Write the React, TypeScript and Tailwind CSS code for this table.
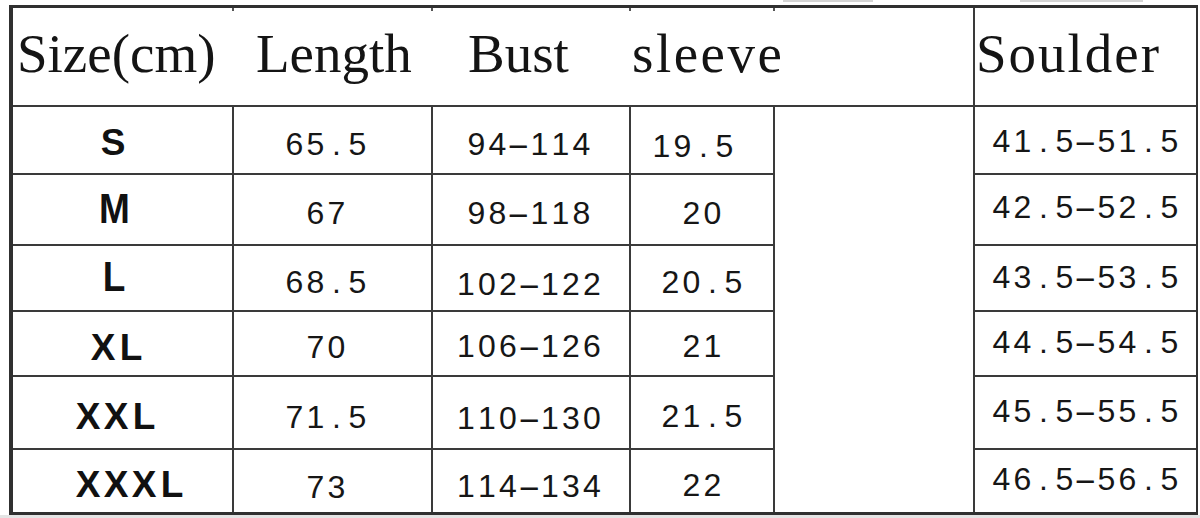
import React from "react";

function Chars({ text, box, glyph = "" }: { text: string; box: string; glyph?: string }) {
  return (
    <>
      {text.split("").map((c, i) => (
        <span key={i} className={`${box} inline-block text-center`}>
          {c === "-" ? (
            <span className="inline-block scale-x-[2.2]">-</span>
          ) : glyph ? (
            <span className={`inline-block ${glyph}`}>{c}</span>
          ) : (
            c
          )}
        </span>
      ))}
    </>
  );
}

type Row = {
  h: string;
  label: string;
  lpl: string;
  lpt: string;
  lglyph: string;
  c2: string;
  c2pt: string;
  c3: string;
  c3pt: string;
  c4: string;
  c4pt: string;
  c4x: string;
  c6: string;
  c6pt: string;
};

const rows: Row[] = [
  { h: "h-[68px]", label: "S", lpl: "pl-[86px]", lpt: "pt-[17px]", lglyph: "", c2: "65.5", c2pt: "pt-[21px]", c3: "94-114", c3pt: "pt-[21px]", c4: "19.5", c4pt: "pt-[23px]", c4x: "pr-[18px]", c6: "41.5-51.5", c6pt: "pt-[18px]" },
  { h: "h-[71px]", label: "M", lpl: "pl-[86px]", lpt: "pt-[18px]", lglyph: "scale-y-[1.16] origin-bottom", c2: "67", c2pt: "pt-[22px]", c3: "98-118", c3pt: "pt-[22px]", c4: "20", c4pt: "pt-[22px]", c4x: "", c6: "42.5-52.5", c6pt: "pt-[16px]" },
  { h: "h-[66px]", label: "L", lpl: "pl-[87px]", lpt: "pt-[15px]", lglyph: "scale-y-[1.16] origin-bottom", c2: "68.5", c2pt: "pt-[20px]", c3: "102-122", c3pt: "pt-[22px]", c4: "20.5", c4pt: "pt-[20px]", c4x: "", c6: "43.5-53.5", c6pt: "pt-[15px]" },
  { h: "h-[65px]", label: "XL", lpl: "pl-[76px]", lpt: "pt-[17px]", lglyph: "", c2: "70", c2pt: "pt-[19px]", c3: "106-126", c3pt: "pt-[18px]", c4: "21", c4pt: "pt-[18px]", c4x: "", c6: "44.5-54.5", c6pt: "pt-[14px]" },
  { h: "h-[73px]", label: "XXL", lpl: "pl-[61px]", lpt: "pt-[21px]", lglyph: "", c2: "71.5", c2pt: "pt-[24px]", c3: "110-130", c3pt: "pt-[25px]", c4: "21.5", c4pt: "pt-[23px]", c4x: "", c6: "45.5-55.5", c6pt: "pt-[18px]" },
  { h: "h-[64px]", label: "XXXL", lpl: "pl-[61px]", lpt: "pt-[16px]", lglyph: "", c2: "73", c2pt: "pt-[21px]", c3: "114-134", c3pt: "pt-[20px]", c4: "22", c4pt: "pt-[19px]", c4x: "", c6: "46.5-56.5", c6pt: "pt-[13px]" },
];

const num = "flex justify-center items-start whitespace-nowrap text-[32px] leading-none text-[#161616] font-['Liberation_Sans',Arial,sans-serif]";

export default function App() {
  return (
    <div className="w-[1200px] h-[518px] bg-white flex flex-col overflow-hidden">
      {/* top strip with faint remnants of cut-off content */}
      <div className="h-[5px] flex items-start shrink-0">
        <div className="w-[783px]" />
        <div className="w-[90px] h-[2px] bg-[#d4d4d4]" />
        <div className="w-[147px]" />
        <div className="w-[123px] h-[2px] bg-[#d4d4d4]" />
      </div>

      <div className="ml-[9px] w-[1189px] h-[510px] shrink-0 border-t-[3px] border-l-[4px] border-r-2 border-b-[3px] border-[#303030] flex flex-col">
        {/* header */}
        <div className="h-[97px] grid grid-cols-[219px_199px_198px_144px_200px_223px] text-[55px] leading-none text-[#141414] font-['Liberation_Serif','Times_New_Roman',serif]">
          <div className="pl-[4px] whitespace-nowrap">
            <div className="h-[3px]" />
            <div className="pt-[15px]">Size(cm)</div>
          </div>
          <div className="whitespace-nowrap">
            <div className="h-[3px] w-[2px] bg-[#555]" />
            <div className="pt-[15px] pl-[24px]">Length</div>
          </div>
          <div className="whitespace-nowrap">
            <div className="h-[3px] w-[2px] bg-[#555]" />
            <div className="pt-[15px] pl-[37px]">Bust</div>
          </div>
          <div className="whitespace-nowrap">
            <div className="h-[3px] w-[2px] bg-[#555]" />
            <div className="pt-[15px] pl-[3px] tracking-[2.5px]">sleeve</div>
          </div>
          <div>
            <div className="h-[3px] w-[2px] bg-[#555]" />
          </div>
          <div className="border-l-2 border-[#3a3a3a] whitespace-nowrap">
            <div className="pt-[18px] pl-[1px] tracking-[2px]">Soulder</div>
          </div>
        </div>

        {/* body */}
        <div className="flex flex-1">
          <div className="w-[760px] flex flex-col">
            {rows.map((r) => (
              <div key={r.label} className={`${r.h} flex border-t-2 border-[#3a3a3a]`}>
                <div className={`w-[219px] ${r.lpl} ${r.lpt} flex items-start whitespace-nowrap text-[37px] leading-none font-bold text-[#111] font-['Liberation_Sans',Arial,sans-serif]`}>
                  <Chars text={r.label} box="w-[28px]" glyph={r.lglyph} />
                </div>
                <div className={`w-[199px] border-l-2 border-[#3a3a3a] ${r.c2pt} pr-[13px] ${num}`}>
                  <Chars text={r.c2} box="w-[21px]" />
                </div>
                <div className={`w-[198px] border-l-2 border-[#3a3a3a] ${r.c3pt} pr-[4px] ${num}`}>
                  <Chars text={r.c3} box="w-[21px]" />
                </div>
                <div className={`w-[144px] border-l-2 border-[#3a3a3a] ${r.c4pt} ${r.c4x} ${num}`}>
                  <Chars text={r.c4} box="w-[21px]" />
                </div>
              </div>
            ))}
          </div>
          <div className="w-[200px] border-l-2 border-t-2 border-[#3a3a3a]" />
          <div className="w-[223px] border-l-2 border-[#3a3a3a] flex flex-col">
            {rows.map((r) => (
              <div key={r.label} className={`${r.h} border-t-2 border-[#3a3a3a] ${r.c6pt} ${num}`}>
                <Chars text={r.c6} box="w-[21px]" />
              </div>
            ))}
          </div>
        </div>
      </div>

      <div className="h-[3px] bg-[#e4e4e4] shrink-0" />
    </div>
  );
}
